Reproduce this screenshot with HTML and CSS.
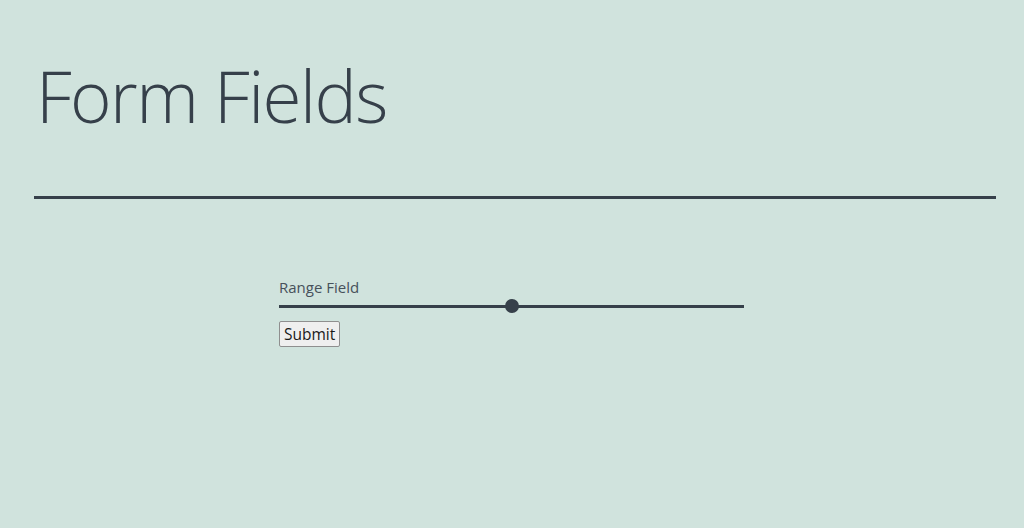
FILE: index.html
```html
<!DOCTYPE html>
<html lang="en">
<head>
<meta charset="utf-8">
<title>Form Fields</title>
<link rel="stylesheet" href="styles.css">
</head>
<body>
<header class="page-head">
  <h1 class="title">Form Fields</h1>
  <div class="rule"></div>
</header>
<form class="form">
  <label class="field-label" for="range">Range Field</label>
  <input class="range" id="range" type="range" min="0" max="100" value="50">
  <button class="submit" type="submit">Submit</button>
</form>
</body>
</html>
```
FILE: styles.css
```css
html, body {
  margin: 0;
  padding: 0;
  background: #d0e3dd;
  color: #36404a;
  font-family: "Open Sans", "Liberation Sans", sans-serif;
}
body {
  padding: 0 28px 0 34px;
  height: 528px;
  box-sizing: border-box;
  overflow: hidden;
}
.page-head {
  display: flex;
  flex-direction: column;
}
.title {
  margin: 46px 0 0 2px;
  font-size: 71px;
  line-height: 100px;
  font-weight: 300;
  letter-spacing: -1.6px;
}
.rule {
  margin-top: 50px;
  height: 3px;
  background: #36404a;
}
.form {
  width: 465px;
  margin: 78px 0 0 245px;
  display: flex;
  flex-direction: column;
  align-items: flex-start;
}
.field-label {
  font-size: 15px;
  line-height: 20px;
  color: #47515b;
}
.range {
  -webkit-appearance: none;
  appearance: none;
  width: 465px;
  height: 14px;
  margin: 2px 0 0 0;
  padding: 0;
  background: transparent;
}
.range::-webkit-slider-runnable-track {
  height: 3px;
  background: #36404a;
  border: none;
}
.range::-webkit-slider-thumb {
  -webkit-appearance: none;
  appearance: none;
  width: 14px;
  height: 14px;
  border-radius: 50%;
  background: #36404a;
  border: none;
  margin-top: -5.5px;
}
.range::-moz-range-track {
  height: 3px;
  background: #36404a;
}
.range::-moz-range-thumb {
  width: 14px;
  height: 14px;
  border-radius: 50%;
  background: #36404a;
  border: none;
}
.submit {
  margin-top: 8px;
  font-family: "Open Sans", "Liberation Sans", sans-serif;
  font-size: 15.5px;
  line-height: 22px;
  padding: 1px 4px;
  border: 1px solid #8f8f8f;
  border-radius: 2px;
  background: #efefef;
  color: #1a1a1a;
}
```
